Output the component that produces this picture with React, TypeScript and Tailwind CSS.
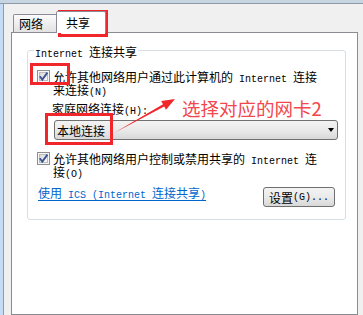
const ASCII_RUN = /([\x20-\x7e]+)/;
const ASCII_ONLY = /^[\x20-\x7e]+$/;

// SimSun-like mix: 6px-wide Latin runs, 12px CJK
function Mixed({ text, link = false }: { text: string; link?: boolean }) {
  return (
    <>
      {text
        .split(ASCII_RUN)
        .filter(Boolean)
        .map((part, i) =>
          ASCII_ONLY.test(part) ? (
            <span
              key={i}
              className={
                link
                  ? "whitespace-pre font-['Liberation_Mono',monospace] text-[10px]"
                  : "inline-block whitespace-pre font-['Liberation_Mono',monospace] text-[10px] leading-[13px]"
              }
            >
              {part}
            </span>
          ) : (
            <span key={i} className={link ? "" : "inline-block leading-[13px]"}>
              {part}
            </span>
          )
        )}
    </>
  );
}

function Checkbox() {
  return (
    <svg width="13" height="13" viewBox="0 0 13 13" className="shrink-0">
      <defs>
        <linearGradient id="cb-inner" x1="0" y1="0" x2="1" y2="1">
          <stop offset="0" stopColor="#d8d8d8" />
          <stop offset="1" stopColor="#fcfcfc" />
        </linearGradient>
      </defs>
      <rect x="0.5" y="0.5" width="12" height="12" fill="#f6f6f6" stroke="#8e8f8f" />
      <rect x="2.5" y="2.5" width="8" height="8" fill="url(#cb-inner)" stroke="#bcbcbc" />
      <path d="M2.8 6.2 L5.3 9.6 L10.4 2.6" fill="none" stroke="#3e5492" strokeWidth="1.9" />
    </svg>
  );
}

export default function App() {
  return (
    <div className="relative flex h-[315px] w-[363px] flex-col overflow-hidden bg-[#f0f0f0] font-['Noto_Sans_CJK_SC',sans-serif] text-[12px] leading-[13px] text-black">
      <div className="h-[4px] shrink-0 border-b border-[#8d9bab] bg-[#c7d4e2]" />
      <div className="flex min-h-0 flex-1">
        <div className="w-[4px] shrink-0 border-r border-[#8a9cb2] bg-[#c4dcf5]" />
        <div className="flex min-w-0 flex-1 flex-col pr-[5px] pl-[7px]">
          {/* tabs */}
          <div className="flex h-[28px] shrink-0 items-end pl-[2px]">
            <div className="flex h-[18px] w-[45px] items-center rounded-t-[2px] border border-b-0 border-[#898c95] bg-linear-to-b from-[#fbfbfb] to-[#e2e2e2] pl-[5px]">
              网络
            </div>
            <div className="relative z-10 -mb-px -ml-[2px] flex h-[22px] w-[50px] items-center rounded-t-[2px] border border-b-0 border-[#898c95] bg-white pl-[9px]">
              共享
            </div>
          </div>

          {/* tab page */}
          <div className="flex-1 border border-[#898c95] bg-white pt-[17px] pl-[15px]">
            <div className="relative flex h-[170px] w-[319px] flex-col rounded-[3px] border border-[#d5dfe5] pt-[19px] pl-[9px]">
              <span className="absolute -top-[6px] left-[6px] h-[13px] bg-white px-px">
                <Mixed text="Internet 连接共享" />
              </span>

              <div className="flex gap-[3px]">
                <Checkbox />
                <div>
                  <div className="h-[13px] whitespace-nowrap">
                    <Mixed text="允许其他网络用户通过此计算机的 Internet 连接" />
                  </div>
                  <div className="h-[13px]">
                    <Mixed text="来连接(N)" />
                  </div>
                </div>
              </div>

              <div className="mt-[6px] ml-[15px] h-[13px]">
                <Mixed text="家庭网络连接(H):" />
              </div>

              <div className="mt-[5px] ml-[17px] flex h-[20px] w-[284px] items-center justify-between rounded-[3px] border border-[#707070] bg-linear-to-b from-[#f3f3f3] via-[#eaeaea] via-50% to-[#d8d8d8] pr-[3px] pl-[2px]">
                <span className="leading-[13px]">本地连接</span>
                <span className="h-0 w-0 border-x-[3.5px] border-t-[4px] border-x-transparent border-t-black" />
              </div>

              <div className="mt-[12px] flex gap-[3px]">
                <Checkbox />
                <div>
                  <div className="h-[13px] whitespace-nowrap">
                    <Mixed text="允许其他网络用户控制或禁用共享的 Internet 连" />
                  </div>
                  <div className="h-[13px]">
                    <Mixed text="接(O)" />
                  </div>
                </div>
              </div>

              <div className="mt-[8px] flex items-start justify-between pr-[10px]">
                <a className="ml-px h-[13px] whitespace-nowrap text-[#0066cc] underline underline-offset-[2px]">
                  <Mixed text="使用 ICS (Internet 连接共享)" link />
                </a>
                <button className="mt-px flex h-[20px] w-[72px] items-center justify-center rounded-[3px] border border-[#707070] bg-linear-to-b from-[#f3f3f3] via-[#eaeaea] via-50% to-[#d8d8d8]">
                  <Mixed text="设置(G)..." />
                </button>
              </div>
            </div>
          </div>
        </div>
      </div>

      {/* red annotations */}
      <div className="absolute top-[10px] left-[58px] h-[27px] w-[50px] border-[3px] border-[#f1262b]" />
      <div className="absolute top-[63px] left-[30px] h-[22px] w-[40px] border-[3px] border-[#f1262b]" />
      <div className="absolute top-[113px] left-[45px] h-[32px] w-[68px] border-[3px] border-[#f1262b]" />
      <svg className="absolute top-0 left-0" width="363" height="315" viewBox="0 0 363 315">
        <polygon
          points="114,133 164.2,106.4 166,109.7 175,99 161.2,100.9 163,104.2"
          fill="#f1262b"
        />
      </svg>
      <div className="absolute top-[96px] left-[182px] text-[18.5px] leading-[24px] text-[#f2474b]">
        选择对应的网卡2
      </div>
    </div>
  );
}
